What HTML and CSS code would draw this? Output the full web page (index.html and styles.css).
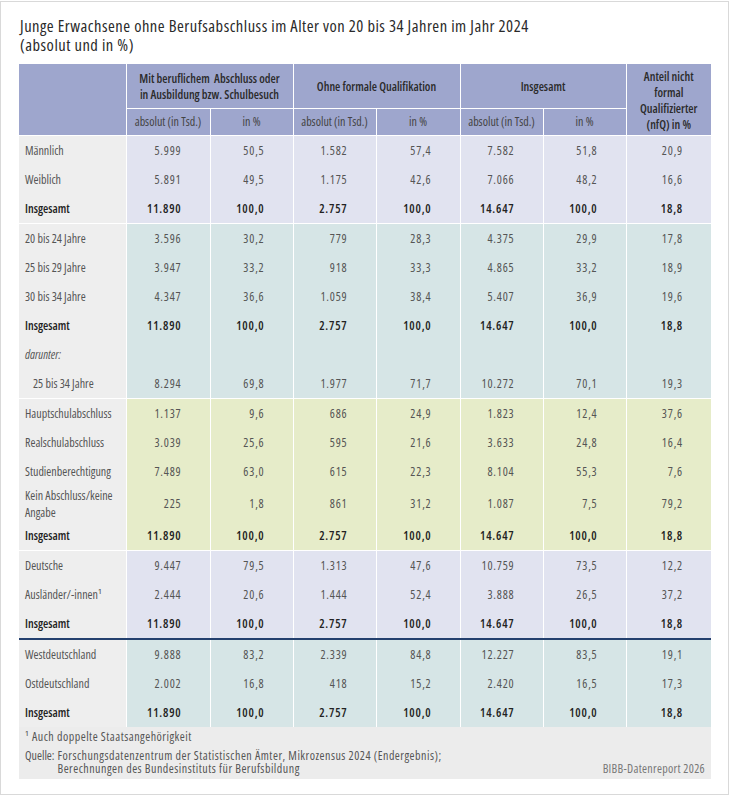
FILE: index.html
```html
<!DOCTYPE html>
<html lang="de">
<head>
<meta charset="utf-8">
<title>Junge Erwachsene ohne Berufsabschluss</title>
<link rel="stylesheet" href="styles.css">
</head>
<body>
<div class="frame">
  <h1 class="title">Junge Erwachsene ohne Berufsabschluss im Alter von 20 bis 34 Jahren im Jahr 2024<br>(absolut und in %)</h1>
  <table class="data">
    <colgroup>
      <col class="c-lbl"><col class="c84"><col class="c83"><col class="c83"><col class="c84"><col class="c83"><col class="c83"><col class="c85">
    </colgroup>
    <thead>
      <tr class="h1">
        <th class="corner" rowspan="2"></th>
        <th colspan="2">Mit beruflichem&nbsp; Abschluss oder<br>in Ausbildung bzw. Schulbesuch</th>
        <th colspan="2">Ohne formale Qualifikation</th>
        <th colspan="2">Insgesamt</th>
        <th rowspan="2" class="nfq">Anteil nicht<br>formal<br>Qualifizierter<br>(nfQ) in %</th>
      </tr>
      <tr class="h2">
        <th class="sub">absolut (in Tsd.)</th><th class="sub">in %</th>
        <th class="sub">absolut (in Tsd.)</th><th class="sub">in %</th>
        <th class="sub">absolut (in Tsd.)</th><th class="sub">in %</th>
      </tr>
    </thead>
    <tbody class="lav">
      <tr><td class="lbl">Männlich</td><td>5.999</td><td>50,5</td><td>1.582</td><td>57,4</td><td>7.582</td><td>51,8</td><td>20,9</td></tr>
      <tr><td class="lbl">Weiblich</td><td>5.891</td><td>49,5</td><td>1.175</td><td>42,6</td><td>7.066</td><td>48,2</td><td>16,6</td></tr>
      <tr class="total"><td class="lbl">Insgesamt</td><td>11.890</td><td>100,0</td><td>2.757</td><td>100,0</td><td>14.647</td><td>100,0</td><td>18,8</td></tr>
    </tbody>
    <tbody class="teal">
      <tr><td class="lbl">20 bis 24 Jahre</td><td>3.596</td><td>30,2</td><td>779</td><td>28,3</td><td>4.375</td><td>29,9</td><td>17,8</td></tr>
      <tr><td class="lbl">25 bis 29 Jahre</td><td>3.947</td><td>33,2</td><td>918</td><td>33,3</td><td>4.865</td><td>33,2</td><td>18,9</td></tr>
      <tr><td class="lbl">30 bis 34 Jahre</td><td>4.347</td><td>36,6</td><td>1.059</td><td>38,4</td><td>5.407</td><td>36,9</td><td>19,6</td></tr>
      <tr class="total"><td class="lbl">Insgesamt</td><td>11.890</td><td>100,0</td><td>2.757</td><td>100,0</td><td>14.647</td><td>100,0</td><td>18,8</td></tr>
      <tr><td class="lbl"><em>darunter:</em></td><td></td><td></td><td></td><td></td><td></td><td></td><td></td></tr>
      <tr><td class="lbl indent">25 bis 34 Jahre</td><td>8.294</td><td>69,8</td><td>1.977</td><td>71,7</td><td>10.272</td><td>70,1</td><td>19,3</td></tr>
    </tbody>
    <tbody class="green">
      <tr><td class="lbl">Hauptschulabschluss</td><td>1.137</td><td>9,6</td><td>686</td><td>24,9</td><td>1.823</td><td>12,4</td><td>37,6</td></tr>
      <tr><td class="lbl">Realschulabschluss</td><td>3.039</td><td>25,6</td><td>595</td><td>21,6</td><td>3.633</td><td>24,8</td><td>16,4</td></tr>
      <tr><td class="lbl">Studienberechtigung</td><td>7.489</td><td>63,0</td><td>615</td><td>22,3</td><td>8.104</td><td>55,3</td><td>7,6</td></tr>
      <tr class="tall"><td class="lbl two">Kein Abschluss/keine<br>Angabe</td><td>225</td><td>1,8</td><td>861</td><td>31,2</td><td>1.087</td><td>7,5</td><td>79,2</td></tr>
      <tr class="total"><td class="lbl">Insgesamt</td><td>11.890</td><td>100,0</td><td>2.757</td><td>100,0</td><td>14.647</td><td>100,0</td><td>18,8</td></tr>
    </tbody>
    <tbody class="lav">
      <tr><td class="lbl">Deutsche</td><td>9.447</td><td>79,5</td><td>1.313</td><td>47,6</td><td>10.759</td><td>73,5</td><td>12,2</td></tr>
      <tr><td class="lbl">Ausländer/-innen¹</td><td>2.444</td><td>20,6</td><td>1.444</td><td>52,4</td><td>3.888</td><td>26,5</td><td>37,2</td></tr>
      <tr class="total"><td class="lbl">Insgesamt</td><td>11.890</td><td>100,0</td><td>2.757</td><td>100,0</td><td>14.647</td><td>100,0</td><td>18,8</td></tr>
    </tbody>
    <tbody class="teal ruled">
      <tr><td class="lbl">Westdeutschland</td><td>9.888</td><td>83,2</td><td>2.339</td><td>84,8</td><td>12.227</td><td>83,5</td><td>19,1</td></tr>
      <tr><td class="lbl">Ostdeutschland</td><td>2.002</td><td>16,8</td><td>418</td><td>15,2</td><td>2.420</td><td>16,5</td><td>17,3</td></tr>
      <tr class="total"><td class="lbl">Insgesamt</td><td>11.890</td><td>100,0</td><td>2.757</td><td>100,0</td><td>14.647</td><td>100,0</td><td>18,8</td></tr>
    </tbody>
  </table>
  <div class="notes">
    <p class="fn">¹ Auch doppelte Staatsangehörigkeit</p>
    <div class="source">
      <div class="src">
        <span class="src-label">Quelle:</span>
        <span class="src-text">Forschungsdatenzentrum der Statistischen Ämter, Mikrozensus 2024 (Endergebnis);<br>Berechnungen des Bundesinstituts für Berufsbildung</span>
      </div>
      <span class="credit">BIBB-Datenreport 2026</span>
    </div>
  </div>
</div>
</body>
</html>
```

FILE: styles.css
```css
html, body {
  margin: 0;
  padding: 0;
  background: #ffffff;
}

body {
  font-family: "Open Sans", "DejaVu Sans Condensed", sans-serif;
  font-stretch: 75%;
  color: #555555;
}

.frame {
  box-sizing: border-box;
  width: 729px;
  height: 794px;
  margin-top: 1px;
  border: 1px solid #d9d9d9;
  padding: 14px 16px 0 18px;
  overflow: hidden;
}

.title {
  margin: 0 0 10px 1px;
  font-size: 16.5px;
  letter-spacing: 0.5px;
  line-height: 19px;
  font-weight: 500;
  color: #2a2a2a;
}

.data {
  width: 692px;
  border-collapse: collapse;
  table-layout: fixed;
  font-size: 12px;
}

.c-lbl { width: 107px; }
.c84 { width: 84px; }
.c83 { width: 83px; }
.c85 { width: 85px; }

.data th {
  background: #9ea6cd;
  color: #2b2b2b;
  font-weight: 600;
  line-height: 16px;
  text-align: center;
  padding: 0;
  white-space: nowrap;
  border-left: 1px solid #ffffff;
  border-bottom: 1px solid #ffffff;
}

.data th.corner {
  border-left: none;
}

.data tr.h1 th {
  height: 42px;
  padding-top: 2px;
}

.data tr.h2 th {
  height: 26px;
}

.data th.nfq {
  padding-top: 1px;
}

.data th.sub {
  font-weight: normal;
  color: #444444;
}

.data td {
  height: 29px;
  padding: 0 28px 0 0;
  text-align: right;
  vertical-align: middle;
  border-left: 1px solid #ffffff;
  white-space: nowrap;
  line-height: 16px;
  letter-spacing: 0.8px;
}

.data td.lbl {
  text-align: left;
  padding: 0 2px 0 6px;
  background: #eeeeee;
  border-left: none;
  letter-spacing: 0;
}

.data td.indent {
  padding-left: 14px;
}

.data td.two {
  line-height: 17px;
}

.data tr.tall td {
  height: 35px;
}

.data tr.total td {
  font-weight: 600;
  color: #222222;
}

.lav td { background: #e1e3f0; }
.teal td { background: #d6e5e6; }
.green td { background: #e6ecc9; }

.data tbody + tbody tr:first-child td {
  border-top: 1px solid #ffffff;
}

.data tbody.ruled tr:first-child td {
  border-top: 2px solid #24406e;
}

.notes {
  width: 692px;
  box-sizing: border-box;
  background: #ececec;
  padding: 3px 6px 4px 6px;
  font-size: 12px;
  letter-spacing: 0.5px;
  line-height: 13px;
  color: #555555;
}

.fn {
  margin: 0 0 6px 0;
}

.source {
  display: flex;
  justify-content: space-between;
  align-items: flex-end;
}

.src {
  display: flex;
}

.src-label {
  flex: none;
  letter-spacing: 0;
  margin-right: 3px;
}

.credit {
  color: #777777;
  letter-spacing: 0.3px;
}
```
